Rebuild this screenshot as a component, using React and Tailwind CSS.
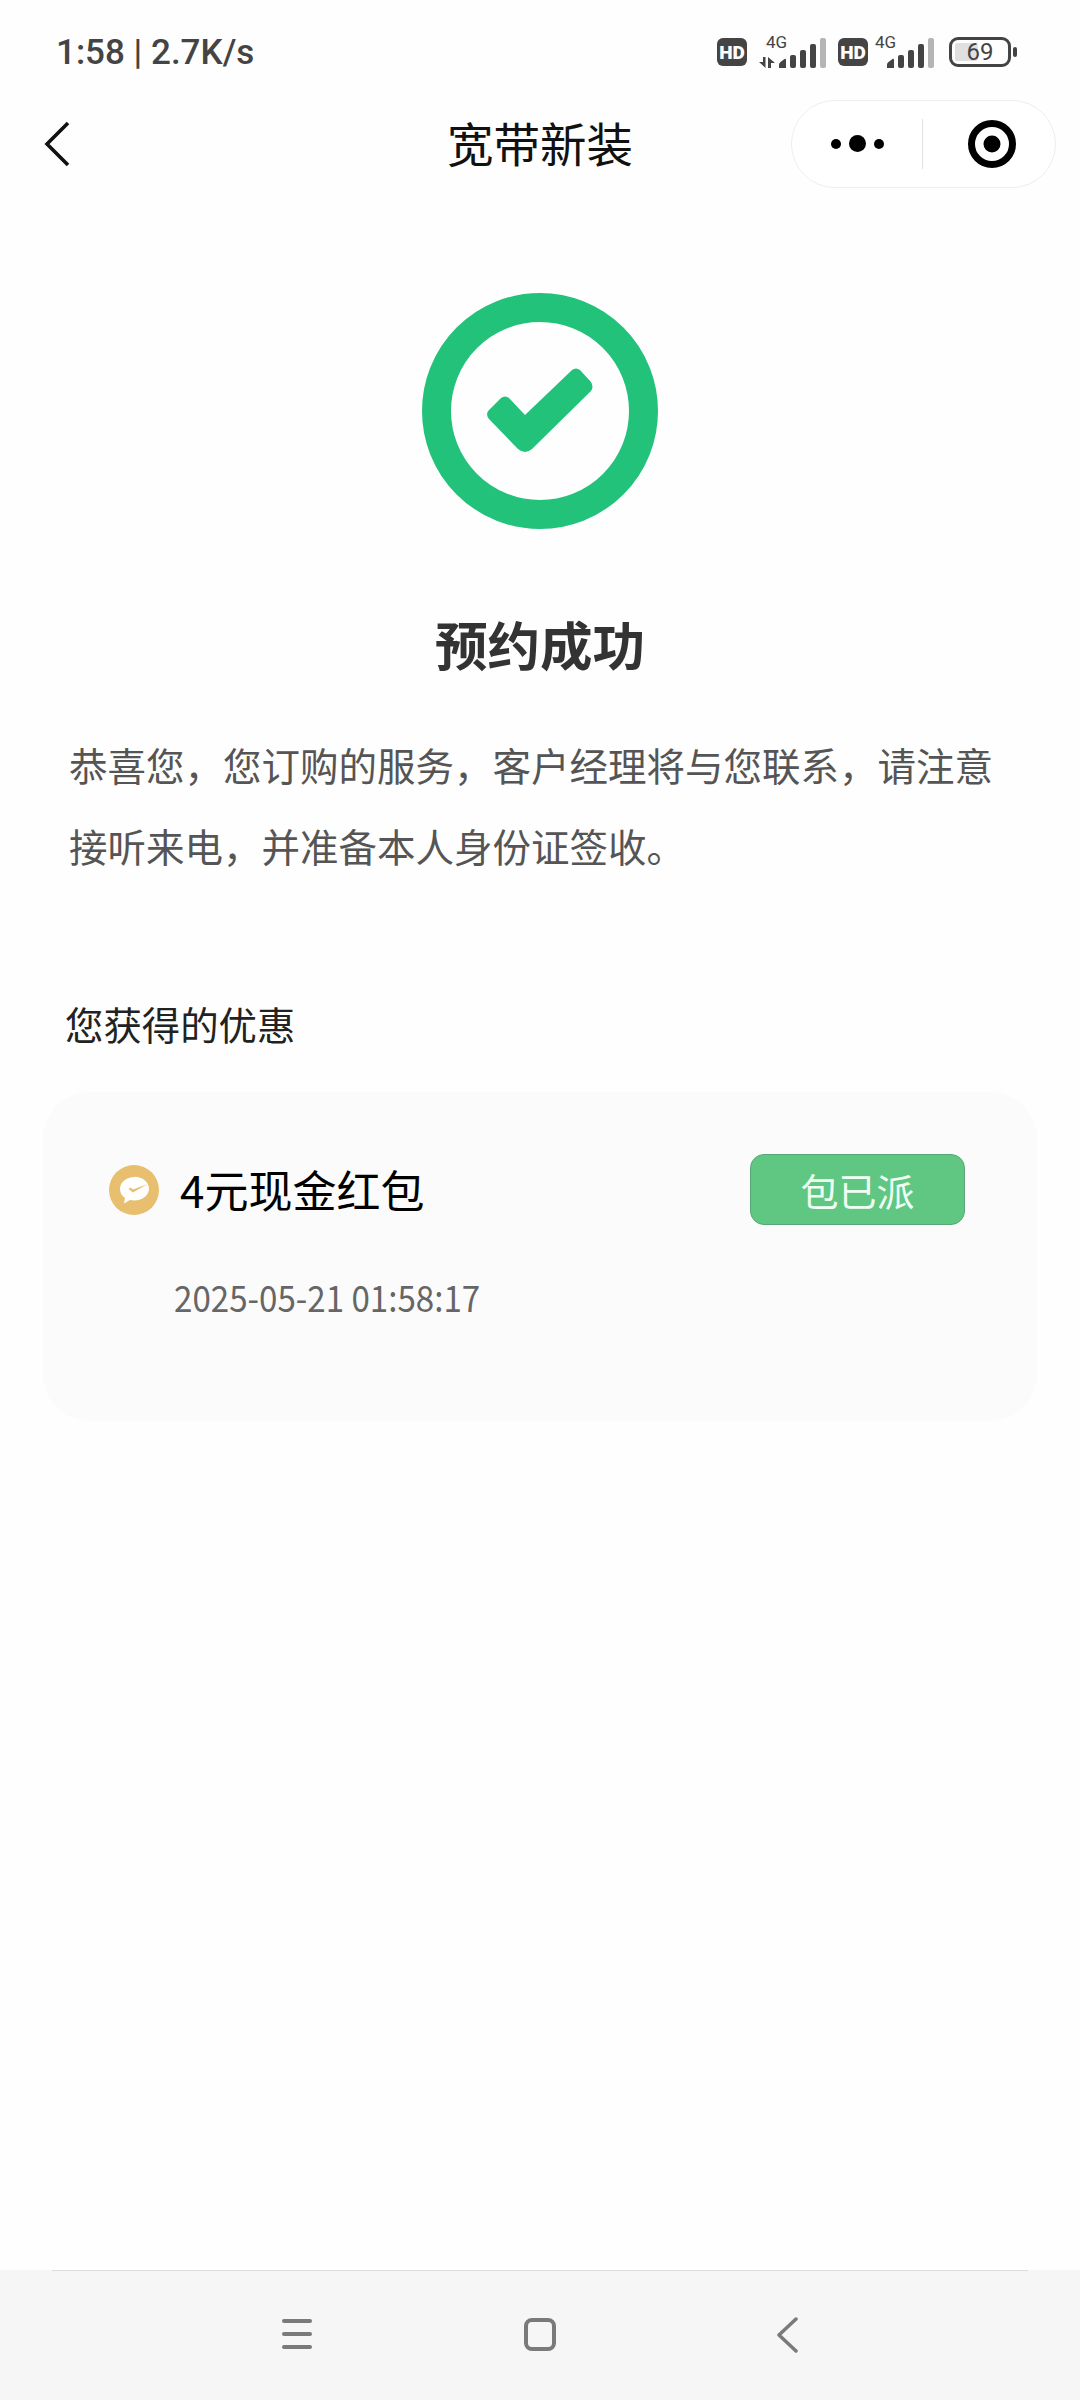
const CJK = '"Noto Sans CJK SC", "Noto Sans", sans-serif';

function Bars() {
  return (
    <svg className="absolute right-0 bottom-0" width="47" height="30" viewBox="0 0 47 30">
      <path d="M0 30v-3.500q0-1.500 1.500-2.500l4-3q1.500-.8 1.500 1v8z" fill="#444444" />
      <rect x="11" y="17" width="6" height="13" rx="2" fill="#444444" />
      <rect x="21" y="12" width="6" height="18" rx="2" fill="#444444" />
      <rect x="31" y="6" width="6" height="24" rx="2" fill="#444444" />
      <rect x="41" y="0" width="6" height="30" rx="2" fill="#b5b5b5" />
    </svg>
  );
}

function Hd() {
  return (
    <div className="mt-[1px] flex items-center justify-center w-[30px] h-[28px] rounded-[6px] bg-[#444444] text-white text-[19px] font-black leading-none font-['Roboto',sans-serif]">
      HD
    </div>
  );
}

function StatusIcons() {
  return (
    <div className="flex items-start text-[#444444]">
      <Hd />
      <div className="relative mt-[1px] ml-[12px] w-[67px] h-[30px]">
        <span className="absolute left-[7px] top-[-4px] text-[17px] leading-none font-['Roboto',sans-serif]">4G</span>
        <svg className="absolute left-0 bottom-0" width="16" height="11" viewBox="0 0 16 11" fill="#444444">
          <path d="M0 5h4v-5h2.500v11zM9 0l7 6h-4v5h-3z" />
        </svg>
        <Bars />
      </div>
      <div className="ml-[12px]"><Hd /></div>
      <div className="relative mt-[1px] w-[66px] h-[30px]">
        <span className="absolute left-[7px] top-[-4px] text-[17px] leading-none font-['Roboto',sans-serif]">4G</span>
        <Bars />
      </div>
      <div className="ml-[15px] relative flex items-center justify-center w-[62px] h-[30px] rounded-[9px] border-[3.500px] border-[#444444]">
        <div className="absolute left-[3px] top-[3px] bottom-[3px] w-[23px] rounded-[2px] bg-[#e0e0e0]" />
        <span className="relative text-[24px] leading-none font-['Roboto',sans-serif] text-[#444444]">69</span>
      </div>
      <div className="ml-[2px] mt-[10px] w-[4px] h-[10px] rounded-[2px] bg-[#444444]" />
    </div>
  );
}

export default function App() {
  return (
    <div className="w-[1080px] h-[2400px] bg-[#fefefe] flex flex-col overflow-hidden" style={{ fontFamily: CJK }}>
      {/* status bar */}
      <div className="h-[100px] shrink-0 flex items-start justify-between pl-[56px] pr-[63px] pt-[33px]">
        <span className="text-[35px] leading-[40px] font-medium text-[#444444] font-['Roboto',sans-serif]">1:58 | 2.7K/s</span>
        <div className="pt-[4px]"><StatusIcons /></div>
      </div>

      {/* nav */}
      <div className="relative h-[87px] shrink-0 flex items-center justify-between pl-[44px] pr-[24px]">
        <svg width="26" height="46" viewBox="0 0 26 46" fill="none" className="mt-[1px]">
          <path d="M24 2L3 23l21 21" stroke="#111111" strokeWidth="3.6" />
        </svg>
        <span className="absolute left-0 right-0 top-[12px] text-center text-[46.500px] leading-[60px] text-[#111111]">宽带新装</span>
        <div className="relative flex items-center w-[265px] h-[88px] rounded-full border-[1.500px] border-[#eeeeee] bg-white">
          <div className="flex items-center justify-center w-[130px] gap-[8px]">
            <div className="w-[10px] h-[10px] rounded-full bg-black" />
            <div className="w-[17px] h-[17px] rounded-full bg-black" />
            <div className="w-[10px] h-[10px] rounded-full bg-black" />
          </div>
          <div className="w-[1px] h-[50px] bg-[#e2e2e2]" />
          <div className="flex-1 flex items-center justify-center pl-[6px]">
            <svg width="50" height="50" viewBox="0 0 50 50">
              <circle cx="25" cy="25" r="20.500" fill="none" stroke="#000" strokeWidth="7" />
              <circle cx="25" cy="25" r="8.500" fill="#000" />
            </svg>
          </div>
        </div>
      </div>

      {/* success icon */}
      <div className="flex justify-center mt-[106px]">
        <svg width="236" height="236" viewBox="0 0 236 236">
          <circle cx="118" cy="118" r="103.500" fill="none" stroke="#23c27a" strokeWidth="29" />
          <path
            d="M67 117 L79 105 Q83 102 87 105 L103 122 L150 77 Q154 74 158 77 L169 89 Q172 94 169 98 L110 156 Q103 162 96 156 L67 126 Q63 121 67 117 Z"
            fill="#23c27a"
          />
        </svg>
      </div>

      <h1 className="mt-[80px] text-center text-[52.500px] leading-[68px] font-bold text-[#333333]">预约成功</h1>

      <p className="mt-[47px] pl-[69px] pr-[58px] text-[38.500px] leading-[81px] text-[#555555]">
        恭喜您，您订购的服务，客户经理将与您联系，请注意接听来电，并准备本人身份证签收。
      </p>

      <div className="mt-[112px] pl-[65px] text-[38.400px] leading-[50px] text-[#222222]">您获得的优惠</div>

      {/* card */}
      <div className="mt-[44px] mx-[43px] h-[329px] rounded-[46px] bg-[#fbfbfb] pl-[66px] pr-[72px] pt-[61px]">
        <div className="flex items-center justify-between">
          <div className="flex items-center">
            <svg width="50" height="50" viewBox="0 0 50 50" className="mt-[1px]">
              <circle cx="25" cy="25" r="25" fill="#e8bf6e" />
              <path d="M25.500 12c-8 0-14.500 5.300-14.500 12 0 3.700 2 7 5 9.100l-1 5.400 6-3.400c1.400.3 3 .5 4.500.5 8 0 14.500-5.300 14.500-11.800s-6.500-12-14.500-12z" fill="#ffffff" />
              <path d="M19.500 24l4.500 3.500L38.500 19 24 24.500l-2.500-2z" fill="#e8bf6e" />
            </svg>
            <span className="ml-[21px] text-[44px] leading-[60px] text-black">4元现金红包</span>
          </div>
          <div className="flex items-center justify-center w-[215px] h-[71px] mt-[1px] rounded-[14px] border border-[#58a877] bg-[#60c783] text-[38px] text-[#f0fff4]">
            包已派
          </div>
        </div>
        <div className="mt-[46px] ml-[65px] text-[36px] leading-[50px] text-[#666666] scale-x-[0.92] origin-left whitespace-nowrap">2025-05-21 01:58:17</div>
      </div>

      {/* system nav */}
      <div className="mt-auto h-[130px] shrink-0 bg-[#f6f6f6] flex flex-col">
        <div className="mx-[52px] h-[1px] bg-[#dddddd]" />
        <div className="relative flex-1">
          <div className="absolute left-[282px] top-[48px] w-[30px] flex flex-col gap-[9.500px]">
            <div className="h-[3.500px] rounded-full bg-[#7a7a7a]" />
            <div className="h-[3.500px] rounded-full bg-[#7a7a7a]" />
            <div className="h-[3.500px] rounded-full bg-[#7a7a7a]" />
          </div>
          <div className="absolute left-[524px] top-[47px] w-[32px] h-[33px] rounded-[8px] border-[4px] border-[#7a7a7a]" />
          <svg className="absolute left-[776px] top-[46px]" width="22" height="36" viewBox="0 0 22 36" fill="none">
            <path d="M20 2L3 18l17 16" stroke="#7a7a7a" strokeWidth="3.500" strokeLinecap="round" strokeLinejoin="round" />
          </svg>
        </div>
      </div>
    </div>
  );
}
